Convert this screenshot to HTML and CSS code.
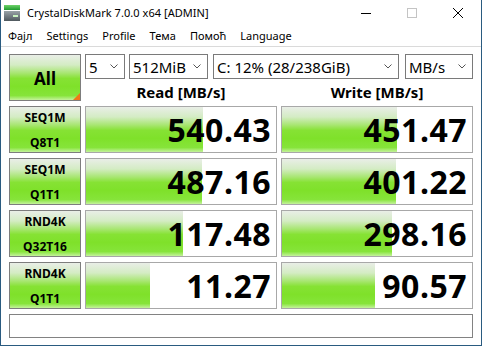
FILE: index.html
```html
<!DOCTYPE html>
<html>
<head>
<meta charset="utf-8">
<link rel="stylesheet" href="styles.css">
</head>
<body>
<div class="window">
  <div class="titlebar">
    <svg class="appicon" width="17" height="17" viewBox="0 0 17 17">
      <defs>
        <linearGradient id="gb" x1="0" y1="0" x2="0" y2="1">
          <stop offset="0" stop-color="#6fd36a"/>
          <stop offset="1" stop-color="#1f9a2e"/>
        </linearGradient>
        <linearGradient id="gd" x1="0" y1="0" x2="0" y2="1">
          <stop offset="0" stop-color="#9aa3a8"/>
          <stop offset="1" stop-color="#4f585e"/>
        </linearGradient>
      </defs>
      <rect x="0" y="0" width="16" height="5" fill="url(#gb)"/>
      <rect x="0" y="6" width="16" height="10" fill="url(#gd)"/>
      <rect x="9" y="10" width="5" height="2" fill="#c9f2c0"/>
    </svg>
    <span class="title">CrystalDiskMark 7.0.0 x64 [ADMIN]</span>
    <div class="controls">
      <span class="ctl"><svg width="10" height="10" viewBox="0 0 10 10"><line x1="0" y1="5.5" x2="10" y2="5.5" stroke="#000" stroke-width="1"/></svg></span>
      <span class="ctl"><svg width="10" height="10" viewBox="0 0 10 10"><rect x="0.5" y="0.5" width="9" height="9" fill="none" stroke="#c4c4c4" stroke-width="1"/></svg></span>
      <span class="ctl"><svg width="10" height="10" viewBox="0 0 10 10"><path d="M0 0 L10 10 M10 0 L0 10" stroke="#000" stroke-width="1"/></svg></span>
    </div>
  </div>
  <div class="menubar">
    <span class="mi">Фајл</span>
    <span class="mi">Settings</span>
    <span class="mi">Profile</span>
    <span class="mi">Тема</span>
    <span class="mi">Помоћ</span>
    <span class="mi">Language</span>
  </div>
  <div class="content">
    <div class="grid">
      <div class="allbtn">All<span class="corner"></span></div>
      <div class="topright">
        <div class="combos">
          <div class="combo c1"><span>5</span><svg class="chev" width="8" height="5" viewBox="0 0 8 5"><polyline points="0.5,0.5 4,4 7.5,0.5" fill="none" stroke="#555" stroke-width="1"/></svg></div>
          <div class="combo c2"><span>512MiB</span><svg class="chev" width="8" height="5" viewBox="0 0 8 5"><polyline points="0.5,0.5 4,4 7.5,0.5" fill="none" stroke="#555" stroke-width="1"/></svg></div>
          <div class="combo c3"><span>C: 12% (28/238GiB)</span><svg class="chev" width="8" height="5" viewBox="0 0 8 5"><polyline points="0.5,0.5 4,4 7.5,0.5" fill="none" stroke="#555" stroke-width="1"/></svg></div>
          <div class="combo c4"><span>MB/s</span><svg class="chev" width="8" height="5" viewBox="0 0 8 5"><polyline points="0.5,0.5 4,4 7.5,0.5" fill="none" stroke="#555" stroke-width="1"/></svg></div>
        </div>
        <div class="headers">
          <div class="hdr">Read [MB/s]</div>
          <div class="hdr">Write [MB/s]</div>
        </div>
      </div>

      <div class="label"><div>SEQ1M</div><div>Q8T1</div></div>
      <div class="cell" style="--w:117px">540.43</div>
      <div class="cell" style="--w:115px">451.47</div>

      <div class="label"><div>SEQ1M</div><div>Q1T1</div></div>
      <div class="cell" style="--w:116px">487.16</div>
      <div class="cell" style="--w:114px">401.22</div>

      <div class="label"><div>RND4K</div><div>Q32T16</div></div>
      <div class="cell" style="--w:97px">117.48</div>
      <div class="cell" style="--w:110px">298.16</div>

      <div class="label"><div>RND4K</div><div>Q1T1</div></div>
      <div class="cell" style="--w:64px">11.27</div>
      <div class="cell" style="--w:93px">90.57</div>
    </div>
    <div class="status"></div>
  </div>
</div>
</body>
</html>
```

FILE: styles.css
```css
* { box-sizing: border-box; }
html, body { margin: 0; padding: 0; background: #ffffff; }
body { width: 482px; height: 347px; overflow: hidden; font-family: "Noto Sans", "Open Sans", sans-serif; color: #000; }

.window {
  width: 482px;
  height: 346px;
  border: 1px solid #2a5b80;
  border-top: none;
  background: #ffffff;
  display: flex;
  flex-direction: column;
}

.titlebar {
  height: 26px;
  display: flex;
  align-items: center;
  background: #ffffff;
}
.appicon { margin-left: 3px; margin-top: 1px; }
.title { margin-left: 6px; font-size: 11px; line-height: 16px; letter-spacing: 0.05px; }
.controls { margin-left: auto; display: flex; height: 26px; }
.ctl { width: 46px; height: 26px; display: flex; align-items: center; justify-content: center; }

.menubar {
  height: 21px;
  display: flex;
  align-items: center;
  border-bottom: 1px solid #dadada;
  font-size: 11px;
}
.mi { padding: 0 7px; line-height: 18px; }
.mi:first-child { padding-left: 7px; }

.content { padding: 7px 0 0 8px; }

.grid {
  display: grid;
  grid-template-columns: 72px 192px 192px;
  grid-auto-rows: 47px;
  column-gap: 4px;
  row-gap: 5px;
}

.allbtn {
  position: relative;
  border: 1px solid #7d7d7d;
  background: linear-gradient(to bottom, #e9eee7 0%, #d4ecc4 22%, #a8e672 40%, #86e234 52%, #7fe12a 70%, #86e43a 90%, #c4f29c 100%);
  font-weight: 700;
  font-size: 17px;
  display: flex;
  align-items: center;
  justify-content: center;
  padding-top: 1px;
}
.corner {
  position: absolute;
  right: 0;
  bottom: 0;
  width: 0;
  height: 0;
  border-left: 7px solid transparent;
  border-bottom: 7px solid #f07818;
}

.topright { grid-column: 2 / 4; display: flex; flex-direction: column; }
.combos { display: flex; height: 25px; }
.combo {
  height: 25px;
  border: 1px solid #7a7a7a;
  background: #fff;
  display: flex;
  align-items: center;
  padding: 0 6px 0 3px;
  font-size: 15px;
}
.combo span { flex: 1; line-height: 20px; white-space: nowrap; }
.chev { flex: none; }
.c1 { width: 40px; }
.c2 { width: 79px; margin-left: 4px; }
.c3 { width: 186px; margin-left: 5px; }
.c4 { width: 68px; margin-left: 6px; }

.headers { display: flex; gap: 4px; padding-top: 4px; }
.hdr { width: 192px; text-align: center; font-weight: 700; font-size: 15px; line-height: 18px; }

.label {
  border: 1px solid #7d7d7d;
  background: linear-gradient(to bottom, #e9eee7 0%, #d4ecc4 22%, #a8e672 40%, #86e234 52%, #7fe12a 70%, #86e43a 90%, #c4f29c 100%);
  font-weight: 700;
  font-size: 12px;
  display: flex;
  flex-direction: column;
  align-items: center;
  justify-content: center;
}
.label div { line-height: 25px; height: 25px; flex: none; }

.cell {
  border: 1px solid #a8a8a8;
  background-color: #fff;
  background-image: linear-gradient(to bottom, #e9eee7 0%, #d4ecc4 22%, #a8e672 40%, #86e234 52%, #7fe12a 70%, #86e43a 90%, #c4f29c 100%);
  background-repeat: no-repeat;
  background-size: var(--w) 100%;
  font-weight: 700;
  font-size: 32px;
  line-height: 45px;
  text-align: right;
  padding-right: 5px;
  letter-spacing: 0.5px;
}

.status {
  margin-top: 5px;
  width: 464px;
  height: 24px;
  border: 1px solid #828282;
  background: #fff;
}
```
